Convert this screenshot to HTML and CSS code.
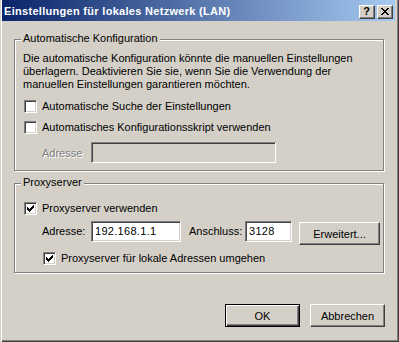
FILE: index.html
```html
<!DOCTYPE html>
<html>
<head>
<meta charset="utf-8">
<link rel="stylesheet" href="styles.css">
</head>
<body>
<div class="window">
  <div class="titlebar">
    <span class="title">Einstellungen für lokales Netzwerk (LAN)</span>
    <div class="capbtns">
      <div class="capbtn"><span class="qmark">?</span></div>
      <div class="capbtn">
        <svg width="8" height="7" viewBox="0 0 8 7" shape-rendering="crispEdges"><path fill="#000" d="M0 0h2v1H0zM6 0h2v1H6zM1 1h2v1H1zM5 1h2v1H5zM2 2h4v1H2zM3 3h2v1H3zM2 4h4v1H2zM1 5h2v1H1zM5 5h2v1H5zM0 6h2v1H0zM6 6h2v1H6z"/></svg>
      </div>
    </div>
  </div>
  <div class="content">
    <div class="group group-auto">
      <div class="legend">Automatische Konfiguration</div>
      <p class="desc">Die automatische Konfiguration könnte die manuellen Einstellungen überlagern. Deaktivieren Sie sie, wenn Sie die Verwendung der manuellen Einstellungen garantieren möchten.</p>
      <div class="check row-a1">
        <span class="box"></span>
        <span class="label">Automatische Suche der Einstellungen</span>
      </div>
      <div class="check row-a2">
        <span class="box"></span>
        <span class="label">Automatisches Konfigurationsskript verwenden</span>
      </div>
      <div class="addr-row">
        <span class="disabled-label">Adresse</span>
        <span class="field field-disabled"></span>
      </div>
    </div>
    <div class="group group-proxy">
      <div class="legend">Proxyserver</div>
      <div class="check row-p1">
        <span class="box"><svg width="7" height="7" viewBox="0 0 7 7" shape-rendering="crispEdges"><path fill="#000" d="M6 0h1v1H6zM5 1h2v1H5zM0 2h1v1H0zM4 2h3v1H4zM0 3h2v1H0zM3 3h3v1H3zM0 4h5v1H0zM1 5h3v1H1zM2 6h1v1H2z"/></svg></span>
        <span class="label">Proxyserver verwenden</span>
      </div>
      <div class="proxy-row">
        <span class="plabel plabel-addr">Adresse:</span>
        <span class="field field-addr">192.168.1.1</span>
        <span class="plabel plabel-port">Anschluss:</span>
        <span class="field field-port">3128</span>
        <span class="btn btn-adv">Erweitert...</span>
      </div>
      <div class="check row-p2">
        <span class="box"><svg width="7" height="7" viewBox="0 0 7 7" shape-rendering="crispEdges"><path fill="#000" d="M6 0h1v1H6zM5 1h2v1H5zM0 2h1v1H0zM4 2h3v1H4zM0 3h2v1H0zM3 3h3v1H3zM0 4h5v1H0zM1 5h3v1H1zM2 6h1v1H2z"/></svg></span>
        <span class="label">Proxyserver für lokale Adressen umgehen</span>
      </div>
    </div>
    <div class="buttons">
      <span class="btn btn-default">OK</span>
      <span class="btn">Abbrechen</span>
    </div>
  </div>
</div>
</body>
</html>
```
FILE: styles.css
```css
* { box-sizing: border-box; }
html, body { margin: 0; padding: 0; background: #d4d0c8; }
body {
  font-family: "Liberation Sans", Arial, sans-serif;
  font-size: 11px;
  color: #000;
}
.window {
  width: 399px;
  height: 342px;
  background: #d4d0c8;
  box-shadow: inset 1px 0 0 #d4d0c8, inset 2px 0 0 #fff, inset -1px -1px 0 #404040, inset -2px -2px 0 #808080;
  display: flex;
  flex-direction: column;
}
.titlebar {
  height: 21px;
  margin: 0 4px 0 2px;
  background: linear-gradient(to right, #0a246a, #a6caf0);
  display: flex;
  align-items: center;
  justify-content: space-between;
  padding: 0 2px 0 2px;
}
.title {
  color: #fff;
  font-weight: bold;
  font-size: 11px;
  letter-spacing: 0.3px;
  line-height: 13px;
  white-space: nowrap;
  padding-top: 1px;
}
.capbtns { display: flex; gap: 2px; padding-top: 2px; }
.capbtn {
  width: 16px;
  height: 14px;
  background: #d4d0c8;
  border: 1px solid;
  border-color: #fff #404040 #404040 #fff;
  box-shadow: inset -1px -1px 0 #808080;
  display: flex;
  align-items: center;
  justify-content: center;
}
.qmark {
  font-weight: bold;
  font-size: 11px;
  line-height: 11px;
  margin-left: -1px;
}
.content {
  padding: 18px 14px 0 14px;
  display: flex;
  flex-direction: column;
}
.group {
  position: relative;
  width: 370px;
  border: 1px solid #808080;
  box-shadow: 1px 1px 0 #fff, inset 1px 1px 0 #fff;
  padding-left: 8px;
}
.group-auto { height: 132px; padding-top: 12px; }
.group-proxy { height: 90px; margin-top: 12px; padding-top: 18px; }
.legend {
  position: absolute;
  top: -8px;
  left: 6px;
  padding: 0 2px;
  background: #d4d0c8;
  line-height: 13px;
  white-space: nowrap;
}
.desc {
  margin: 0;
  line-height: 13px;
  width: 350px;
}
.check {
  display: flex;
  align-items: center;
  height: 13px;
  margin-left: 1px;
}
.row-a1 { margin-top: 9px; }
.row-a2 { margin-top: 8px; }
.box {
  width: 13px;
  height: 13px;
  flex: none;
  background: #fff;
  border: 1px solid;
  border-color: #808080 #fff #fff #808080;
  box-shadow: inset 1px 1px 0 #404040, inset -1px -1px 0 #d4d0c8;
  display: flex;
  align-items: center;
  justify-content: center;
}
.box svg { display: block; }
.label {
  margin-left: 5px;
  line-height: 13px;
  white-space: nowrap;
}
.addr-row {
  display: flex;
  align-items: center;
  margin-top: 8px;
  margin-left: 19px;
}
.disabled-label {
  width: 49px;
  color: #808080;
  text-shadow: 1px 1px 0 #fff;
}
.field {
  height: 21px;
  background: #fff;
  border: 1px solid;
  border-color: #808080 #fff #fff #808080;
  box-shadow: inset 1px 1px 0 #404040, inset -1px -1px 0 #d4d0c8;
  padding: 0 2px 0 3px;
  line-height: 19px;
  letter-spacing: 0.3px;
  white-space: nowrap;
}
.field-disabled { width: 185px; background: #d4d0c8; }
.proxy-row {
  display: flex;
  align-items: flex-start;
  height: 24px;
  margin-top: 6px;
  margin-left: 19px;
}
.plabel { line-height: 21px; white-space: nowrap; }
.plabel-addr { width: 49px; }
.plabel-port { width: 56px; margin-left: 8px; }
.field-addr { width: 90px; }
.field-port { width: 47px; }
.btn {
  display: flex;
  align-items: center;
  justify-content: center;
  height: 23px;
  width: 75px;
  background: #d4d0c8;
  border: 1px solid;
  border-color: #fff #404040 #404040 #fff;
  box-shadow: inset -1px -1px 0 #808080;
  white-space: nowrap;
}
.btn-adv { width: 81px; margin-left: 7px; margin-top: 1px; }
.row-p2 { margin-top: 7px; margin-left: 20px; }
.buttons {
  display: flex;
  justify-content: flex-end;
  gap: 10px;
  margin-top: 31px;
}
.btn-default {
  border: 1px solid #000;
  box-shadow: inset 1px 1px 0 #fff, inset -1px -1px 0 #404040, inset -2px -2px 0 #808080;
}
```
